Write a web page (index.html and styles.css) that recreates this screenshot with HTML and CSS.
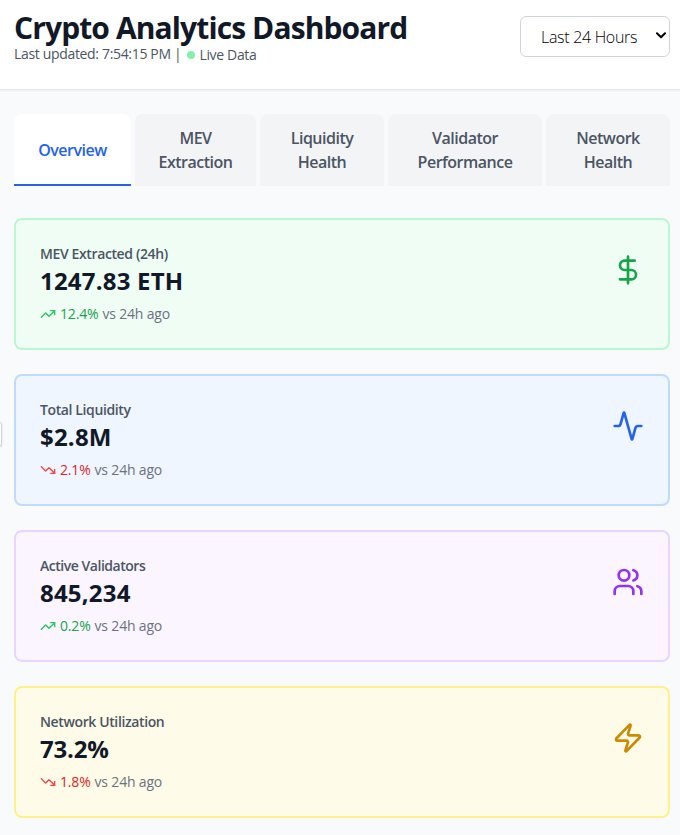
FILE: index.html
```html
<!DOCTYPE html>
<html lang="en">
<head>
<meta charset="utf-8">
<title>Crypto Analytics Dashboard</title>
<link rel="stylesheet" href="styles.css">
</head>
<body>
<header class="header">
  <div>
    <h1 class="title">Crypto Analytics Dashboard</h1>
    <div class="status"><span class="updated">Last updated: 7:54:15 PM |</span><span class="dot"></span><span class="live">Live Data</span></div>
  </div>
  <div class="select"><span>Last 24 Hours</span><svg class="chevron" viewBox="0 0 10 7"><path d="M1 1.2 5 5.2 9 1.2"/></svg></div>
</header>
<main class="main">
  <nav class="tabs">
    <button class="tab active">Overview</button>
    <button class="tab">MEV<br>Extraction</button>
    <button class="tab">Liquidity<br>Health</button>
    <button class="tab">Validator<br>Performance</button>
    <button class="tab">Network<br>Health</button>
  </nav>
  <section class="cards">
    <article class="card green">
      <div>
        <div class="label">MEV Extracted (24h)</div>
        <div class="value">1247.83 ETH</div>
        <div class="trend up"><svg viewBox="0 0 24 24"><path d="M22 7 13.5 15.5 8.5 10.5 2 17"/><path d="M16 7h6v6"/></svg><b>12.4%</b><span>vs 24h ago</span></div>
      </div>
      <svg class="icon" viewBox="0 0 24 24"><path d="M12 2v20M17 5H9.5a3.5 3.5 0 0 0 0 7h5a3.5 3.5 0 0 1 0 7H6"/></svg>
    </article>
    <article class="card blue">
      <div>
        <div class="label">Total Liquidity</div>
        <div class="value">$2.8M</div>
        <div class="trend down"><svg viewBox="0 0 24 24"><path d="M22 17 13.5 8.5 8.5 13.5 2 7"/><path d="M16 17h6v-6"/></svg><b>2.1%</b><span>vs 24h ago</span></div>
      </div>
      <svg class="icon" viewBox="0 0 24 24"><path d="M22 12h-2.48a2 2 0 0 0-1.93 1.46l-2.35 8.36a.25.25 0 0 1-.48 0L9.24 2.18a.25.25 0 0 0-.48 0l-2.35 8.36A2 2 0 0 1 4.49 12H2"/></svg>
    </article>
    <article class="card purple">
      <div>
        <div class="label tight">Active Validators</div>
        <div class="value">845,234</div>
        <div class="trend up"><svg viewBox="0 0 24 24"><path d="M22 7 13.5 15.5 8.5 10.5 2 17"/><path d="M16 7h6v6"/></svg><b>0.2%</b><span>vs 24h ago</span></div>
      </div>
      <svg class="icon" viewBox="0 0 24 24"><path d="M16 21v-2a4 4 0 0 0-4-4H6a4 4 0 0 0-4 4v2"/><circle cx="9" cy="7" r="4"/><path d="M22 21v-2a4 4 0 0 0-3-3.87M16 3.13a4 4 0 0 1 0 7.75"/></svg>
    </article>
    <article class="card yellow">
      <div>
        <div class="label">Network Utilization</div>
        <div class="value percent">73.2%</div>
        <div class="trend down"><svg viewBox="0 0 24 24"><path d="M22 17 13.5 8.5 8.5 13.5 2 7"/><path d="M16 17h6v-6"/></svg><b>1.8%</b><span>vs 24h ago</span></div>
      </div>
      <svg class="icon" viewBox="0 0 24 24"><path d="M4 14a1 1 0 0 1-.78-1.63l9.9-10.2a.5.5 0 0 1 .86.46l-1.92 6.02A1 1 0 0 0 13 10h7a1 1 0 0 1 .78 1.63l-9.9 10.2a.5.5 0 0 1-.86-.46l1.92-6.02A1 1 0 0 0 11 14z"/></svg>
    </article>
  </section>
</main>
<div class="handle"></div>
</body>
</html>
```
FILE: styles.css
```css
* { box-sizing: border-box; }
body { margin: 0; height: 835px; overflow: hidden; background: #f9fafc; color: #111827; font-family: "Open Sans", "Noto Sans", sans-serif; }
h1 { margin: 0; }
svg { fill: none; stroke: currentColor; stroke-width: 2; stroke-linecap: round; stroke-linejoin: round; display: block; flex: none; }
.header { height: 90px; padding: 10px 10px 0 14px; display: flex; justify-content: space-between; background: #fff; border-bottom: 1px solid #e5e7eb; box-shadow: 0 1px 2px rgba(0,0,0,.05); white-space: nowrap; }
.title { font-size: 30px; line-height: 36px; font-weight: 700; letter-spacing: -.89px; }
.status { display: flex; align-items: center; height: 18px; margin-top: -1px; font-size: 14px; line-height: 18px; letter-spacing: -.33px; color: #4b5563; }
.dot { width: 8px; height: 8px; border-radius: 50%; background: #86efac; margin: 1px 4px 0 6px; }
.live { padding-top: 1px; }
.select { margin-top: 6px; width: 150px; height: 41px; display: flex; align-items: center; justify-content: space-between; padding: 1px 3px 0 20px; border: 1px solid #d1d5db; border-radius: 6px; font-size: 16px; font-weight: 300; letter-spacing: -.3px; color: #000; }
.chevron { width: 10px; height: 7px; margin-top: -3px; }
.main { padding: 24px 10px 0 14px; }
.tabs { display: grid; grid-template-columns: 117px 121px 124px 154px 124px; gap: 4px; height: 72px; }
.tab { border: 0; padding: 0; border-radius: 8px 8px 0 0; background: #f3f4f6; color: #4b5563; font: 600 16px/24px "Open Sans", "Noto Sans", sans-serif; letter-spacing: -.5px; }
.tab.active { background: #fff; color: #2563eb; border-bottom: 2px solid #2563eb; padding-top: 2px; }
.cards { display: grid; gap: 24px; margin-top: 32px; }
.card { height: 132px; border: 2px solid; border-radius: 8px; padding: 24px; display: flex; justify-content: space-between; white-space: nowrap; }
.label { font-size: 14px; line-height: 20px; font-weight: 600; letter-spacing: -.38px; color: #4b5563; }
.label.tight { letter-spacing: -.47px; }
.value { font-size: 24px; line-height: 32px; margin: 1px 0 7px; font-weight: 700; letter-spacing: .2px; color: #111827; }
.value.percent { letter-spacing: -.2px; }
.trend { display: flex; align-items: center; gap: 4px; font-size: 14px; line-height: 20px; letter-spacing: -.18px; color: #6b7280; }
.trend b { font-weight: 400; }
.trend svg { width: 16px; height: 16px; }
.up svg { color: #22c55e; }
.up b { color: #16a34a; }
.down svg { color: #ef4444; }
.down b { color: #dc2626; }
.icon { width: 32px; height: 32px; margin-top: 10px; }
.green { background: #f0fdf4; border-color: #bbf7d0; }
.green .icon { color: #16a34a; }
.blue { background: #eff6ff; border-color: #bfdbfe; }
.blue .icon { color: #2563eb; }
.purple { background: #faf5ff; border-color: #e9d5ff; }
.purple .icon { color: #9333ea; }
.yellow { background: #fefce8; border-color: #fef08a; }
.yellow .icon { color: #ca8a04; }
.handle { position: absolute; left: -6px; top: 422px; width: 8px; height: 24px; border: 1px solid #d4d4d4; border-radius: 2px; background: #fff; box-shadow: 0 1px 2px rgba(0,0,0,.15); }
```
